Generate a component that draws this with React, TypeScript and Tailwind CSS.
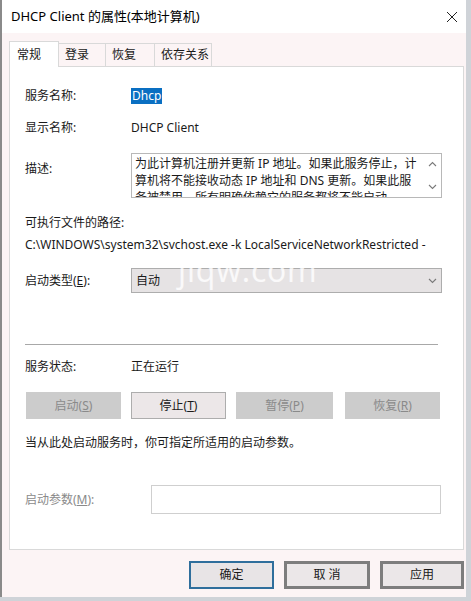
import React from "react";

const F = { fontFamily: '"Segoe UI", "Noto Sans", "Noto Sans CJK SC", sans-serif' } as React.CSSProperties;

function Chev({ up = false }: { up?: boolean }) {
  return (
    <svg width="9" height="6" viewBox="0 0 9 6" className="block">
      <path d={up ? "M1 5 L4.5 1.5 L8 5" : "M1 1 L4.5 4.5 L8 1"} fill="none" stroke="#7a7a7a" strokeWidth="1.1" />
    </svg>
  );
}

export default function App() {
  const label = "w-[106px] shrink-0";
  return (
    <div className="w-[471px] h-[601px] bg-[#cfd3d8] overflow-hidden text-[12px] text-[#1a1a1a]" style={F}>
      <div className="w-[466px] h-[597px] bg-white border-l-2 border-[#8a8a8a] flex flex-col">
        {/* title bar */}
        <div className="h-[33px] flex items-center justify-between pl-[9px] pr-[8px] shrink-0">
          <span className="text-[13px] text-black">DHCP Client 的属性(本地计算机)</span>
          <svg width="12" height="12" viewBox="0 0 12 12">
            <path d="M1 1 L11 11 M11 1 L1 11" stroke="#222" strokeWidth="1" />
          </svg>
        </div>
        <div className="flex-1 bg-[#fcf4f5] flex flex-col pl-[7px] pr-[2px]">
          {/* tabs */}
          <div className="h-[33px] flex items-end shrink-0">
            <div className="h-[26px] w-[50px] bg-white border border-b-0 border-[#d9d9d9] flex items-center pl-[7px] -mb-px relative z-10">常规</div>
            <div className="h-[23px] w-[47px] border-t border-r border-[#d9d9d9] flex items-center pl-[6px] bg-[#fcf4f5]">登录</div>
            <div className="h-[23px] w-[49px] border-t border-r border-[#d9d9d9] flex items-center pl-[6px] bg-[#fcf4f5]">恢复</div>
            <div className="h-[23px] w-[57px] border-t border-r border-[#d9d9d9] flex items-center pl-[6px] bg-[#fcf4f5]">依存关系</div>
          </div>
          {/* panel */}
          <div className="h-[484px] w-[455px] bg-white border border-[#d9d9d9] flex flex-col pl-[15px] pr-[21px] relative">
            <div className="mt-[19px] h-[20px] flex items-center">
              <span className={label}>服务名称:</span>
              <span className="bg-[#0a6fc2] text-white h-[16px] px-[1px] flex items-center">Dhcp</span>
            </div>
            <div className="mt-[12px] h-[20px] flex items-center">
              <span className={label}>显示名称:</span>
              <span>DHCP Client</span>
            </div>
            <div className="mt-[15px] flex">
              <span className={label + " w-[104px] pt-[7px]"}>描述:</span>
              <div className="w-[312px] h-[45px] border border-[#b8b8b8] flex overflow-hidden">
                <div className="flex-1 pl-[3px] pt-[1px] leading-[17px] overflow-hidden">
                  <div className="whitespace-nowrap">为此计算机注册并更新 IP 地址。如果此服务停止，计</div>
                  <div className="whitespace-nowrap">算机将不能接收动态 IP 地址和 DNS 更新。如果此服</div>
                  <div className="whitespace-nowrap">务被禁用，所有明确依赖它的服务都将不能启动。</div>
                </div>
                <div className="w-[17px] flex flex-col items-center justify-between py-[7px]">
                  <Chev up />
                  <Chev />
                </div>
              </div>
            </div>
            <div className="mt-[15px] h-[20px] flex items-center">可执行文件的路径:</div>
            <div className="mt-[2px] h-[20px] flex items-center whitespace-nowrap">C:\WINDOWS\system32\svchost.exe -k LocalServiceNetworkRestricted -</div>
            <div className="mt-[13px] flex items-center">
              <span className={label + " w-[104px]"}>启动类型(<span className="underline">E</span>):</span>
              <div className="w-[312px] h-[25px] bg-[#e6e3e4] border border-[#adadad] flex items-center justify-between pl-[4px] pr-[4px]">
                <span>自动</span>
                <Chev />
              </div>
            </div>
            <div className="mt-[51px] h-px bg-[#a8a8a8] mr-[4px]" />
            <div className="mt-[12px] h-[20px] flex items-center">
              <span className={label}>服务状态:</span>
              <span>正在运行</span>
            </div>
            <div className="mt-[15px] flex gap-[10px]">
              <div className="w-[95px] h-[27px] ml-px bg-[#cccccc] text-[#8a8a8a] flex items-center justify-center">启动(<span className="underline">S</span>)</div>
              <div className="w-[95px] h-[27px] bg-[#ece7e8] border border-[#adadad] flex items-center justify-center">停止(<span className="underline">T</span>)</div>
              <div className="w-[97px] h-[27px] bg-[#cccccc] text-[#8a8a8a] flex items-center justify-center">暂停(<span className="underline">P</span>)</div>
              <div className="w-[95px] h-[27px] ml-[2px] bg-[#cccccc] text-[#8a8a8a] flex items-center justify-center">恢复(<span className="underline">R</span>)</div>
            </div>
            <div className="mt-[14px] h-[20px] flex items-center">当从此处启动服务时，你可指定所适用的启动参数。</div>
            <div className="mt-[32px] flex items-center">
              <span className="w-[126px] shrink-0 text-[#8a8a8a]">启动参数(<span className="underline">M</span>):</span>
              <div className="w-[290px] h-[29px] bg-white border border-[#cfcfcf]" />
            </div>
            <div className="absolute left-[168px] top-[190px] text-[32px] leading-[26px] text-white/80 tracking-wide pointer-events-none" style={{ fontFamily: '"Open Sans", sans-serif' }}>jiqw.com</div>
          </div>
          {/* bottom buttons */}
          <div className="mt-[11px] flex justify-end gap-[10px] pr-0">
            <div className="w-[85px] h-[28px] border-2 border-[#2f6e9c] bg-[#e8e4e6] flex items-center justify-center">确定</div>
            <div className="w-[86px] h-[28px] border-[3px] border-[#7d7d7d] bg-[#ebe7e8] flex items-center justify-center">取 消</div>
            <div className="w-[84px] h-[28px] border-[3px] border-[#7d7d7d] bg-[#ebe7e8] flex items-center justify-center">应用</div>
          </div>
        </div>
      </div>
    </div>
  );
}
